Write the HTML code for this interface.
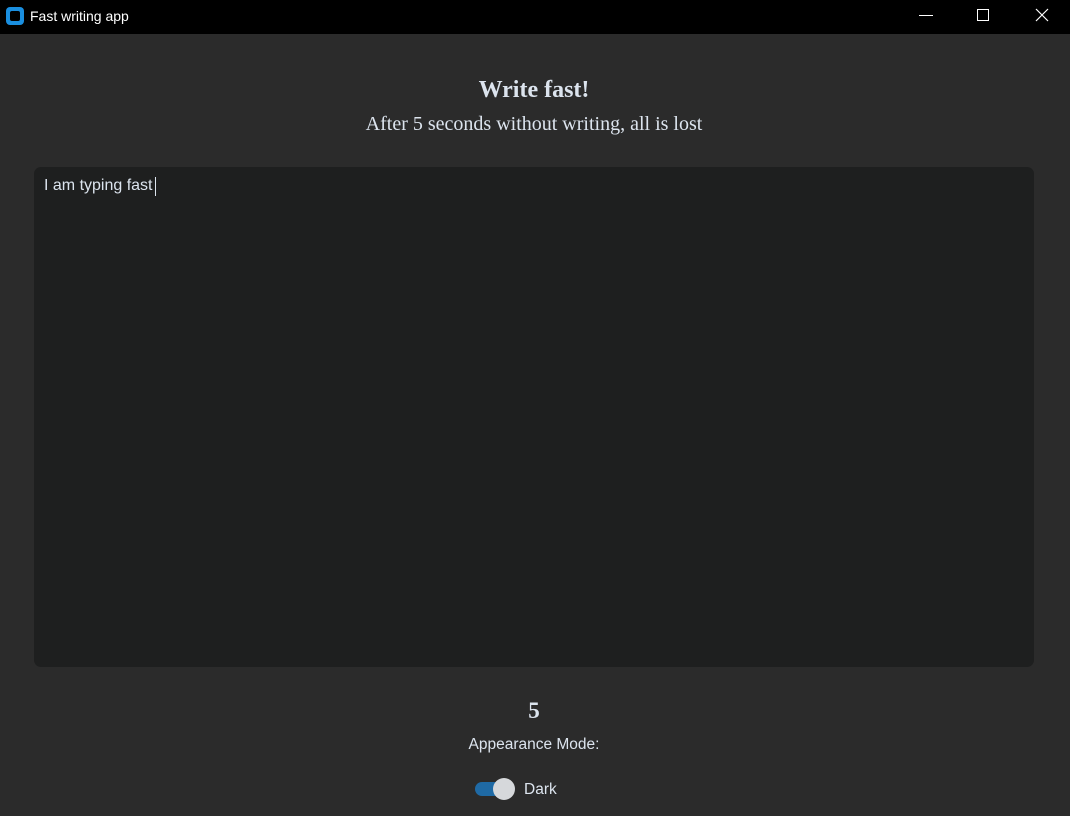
<!DOCTYPE html>
<html><head><meta charset="utf-8"><style>
*{margin:0;padding:0;box-sizing:border-box}
body{width:1070px;height:816px;background:#2b2b2b;overflow:hidden;position:relative;font-family:"Liberation Sans",sans-serif;color:#dce4ee}
.tb{position:absolute;left:0;top:0;width:1070px;height:34px;background:#000}
.ic{position:absolute;left:6px;top:7px;width:18px;height:18px;background:#1a8fe0;border-radius:4px}
.ic:after{content:"";position:absolute;left:4px;top:4px;width:10px;height:10px;background:#000;border-radius:2px}
.tt{position:absolute;left:30px;top:8px;font-size:14px;color:#fff}
.a{position:absolute;white-space:nowrap}
.serif{font-family:"Liberation Serif",serif}
.box{position:absolute;left:34px;top:167px;width:1000px;height:500px;background:#1e1f1f;border-radius:7px}
</style></head><body>
<div class="tb">
<div class="ic"></div><div class="tt">Fast writing app</div>
<div class="a" style="left:919px;top:15px;width:14px;height:1px;background:#fff"></div>
<div class="a" style="left:977px;top:9px;width:12px;height:12px;border:1px solid #fff"></div>
<svg class="a" style="left:1035px;top:8px" width="14" height="14"><path d="M1 1L13 13M13 1L1 13" stroke="#fff" stroke-width="1.2"/></svg>
</div>
<div class="a serif" style="left:0;width:1068px;text-align:center;top:77px;font-size:24px;font-weight:bold">Write fast!</div>
<div class="a serif" style="left:0;width:1068px;text-align:center;top:113px;font-size:20px">After 5 seconds without writing, all is lost</div>
<div class="box"></div>
<div class="a" style="left:44px;top:177px;font-size:16px">I am typing fast</div>
<div class="a" style="left:155px;top:177px;width:1px;height:19px;background:#dce4ee"></div>
<div class="a serif" style="left:0;width:1068px;text-align:center;top:698px;font-size:23px;font-weight:bold">5</div>
<div class="a" style="left:0;width:1068px;text-align:center;top:736px;font-size:15.5px">Appearance Mode:</div>
<div class="a" style="left:475px;top:782px;width:36px;height:14px;background:#1f6aa5;border-radius:7px"></div>
<div class="a" style="left:493px;top:778px;width:22px;height:22px;background:#d6d8db;border-radius:50%"></div>
<div class="a" style="left:524px;top:781px;font-size:15.5px">Dark</div>
</body></html>
